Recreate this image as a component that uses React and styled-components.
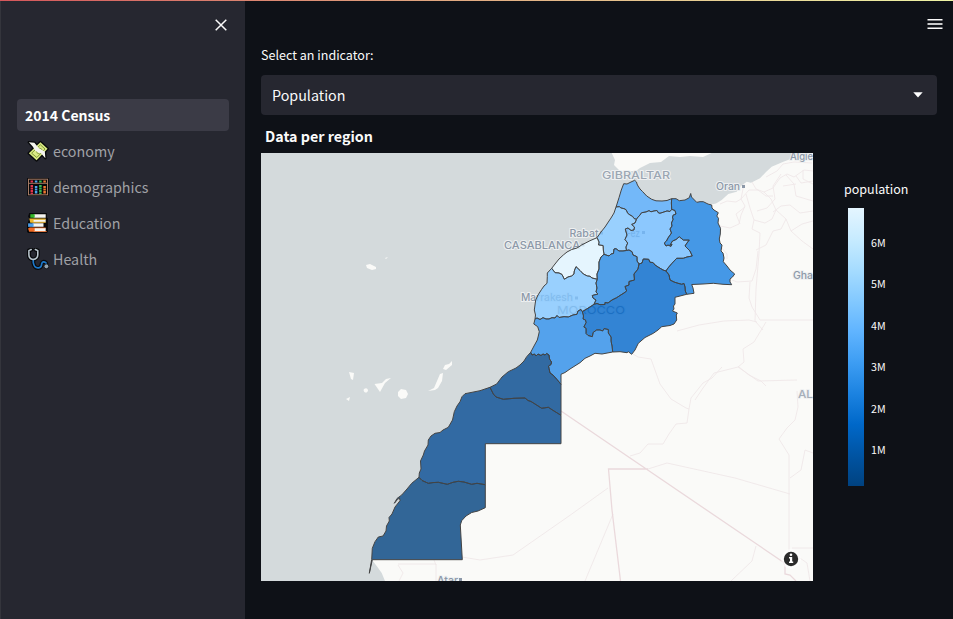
import React from 'react';
import styled, { createGlobalStyle } from 'styled-components';

const GlobalStyle = createGlobalStyle`
  *, *::before, *::after { box-sizing: border-box; }
  html, body { margin: 0; padding: 0; background: #0e1117; overflow: hidden; }
  body { font-family: "Noto Sans CJK JP", "Noto Sans", sans-serif; color: #fafafa; }
`;

const Page = styled.div`
  display: grid;
  grid-template-rows: 1px 1fr;
  width: 953px;
  height: 619px;
  background: #0e1117;
`;
const Decoration = styled.div`
  background: linear-gradient(90deg, #d5575b, #e0a57f 45%, #eff5a5);
`;
const Body = styled.div`
  display: grid;
  grid-template-columns: 245px 1fr;
`;
const Sidebar = styled.aside`
  background: #262730;
  border-left: 1px solid #34353c;
  padding: 16px 16px 0;
  display: flex;
  flex-direction: column;
`;
const CloseRow = styled.div`
  display: flex;
  justify-content: flex-end;
  height: 82px;
  svg { display: block; }
`;
const Nav = styled.nav`
  display: flex;
  flex-direction: column;
  gap: 4px;
`;
const NavItem = styled.a`
  display: flex;
  align-items: center;
  height: 32px;
  gap: 4px;
  padding-left: ${(p) => (p.$active ? 8 : 10)}px;
  border-radius: 4px;
  background: ${(p) => (p.$active ? '#3b3b46' : 'transparent')};
  color: ${(p) => (p.$active ? '#ffffff' : '#a0a1a6')};
  font-size: ${(p) => (p.$active ? 14 : 14.3)}px;
  font-weight: ${(p) => (p.$active ? 700 : 400)};
  line-height: 20px;
  svg { display: block; flex: none; }
`;
const Main = styled.main`
  display: flex;
  flex-direction: column;
  padding: 14px 16px 0;
`;
const Toolbar = styled.header`
  display: flex;
  justify-content: flex-end;
  height: 30px;
  margin-right: -7px;
  svg { display: block; }
`;
const FieldLabel = styled.label`
  height: 30px;
  font-size: 12.55px;
  line-height: 20px;
`;
const Select = styled.div`
  display: flex;
  align-items: center;
  justify-content: space-between;
  height: 40px;
  padding: 0 14px 0 11px;
  border-radius: 4px;
  background: #262730;
  font-size: 14.3px;
  line-height: 20px;
`;
const ChartTitle = styled.h2`
  margin: 0;
  height: 38px;
  padding: 11px 0 0 4px;
  font-size: 14.3px;
  font-weight: 700;
  line-height: 20px;
`;
const Chart = styled.section`
  display: grid;
  grid-template-columns: 552px 1fr;
`;
const MapSvg = styled.svg`
  display: block;
  width: 552px;
  height: 428px;
  background: #d4dadc;
`;
const Legend = styled.div`
  padding: 26px 0 0 31px;
`;
const LegendTitle = styled.div`
  height: 29px;
  font-size: 12.5px;
  line-height: 20px;
`;
const LegendBody = styled.div`
  display: flex;
  gap: 7px;
  padding-left: 4px;
`;
const ColorBar = styled.div`
  width: 16px;
  height: 278px;
  background: linear-gradient(
    to bottom,
    #e4f5ff, #c7ebff, #a6dcff, #83c9ff, #60b4ff,
    #3d9df3, #1c83e1, #0068c9, #0054a3, #004280
  );
`;
const Ticks = styled.div`
  display: flex;
  flex-direction: column;
  padding-top: 14px;
  font-size: 10.7px;
`;
const Tick = styled.span`
  height: 41.4px;
  line-height: 41.4px;
`;

/* Shared boundary lines, in map coordinates. */
const edges = {
  coastNorth: '616,207 616.7,205 619,197.7 621.3,190 623.7,183.7 627,184 631,182 634.7,180.3 636.5,182 637,184 638,186 640,189 642.7,191.7 646.7,196 651.7,199.3 656,200.8 662,201 667,200.5 670,199.3 671.7,198.7',
  northOriental: '671.7,198.7 671.4,203 671.7,209.3',
  northFez: '671.7,209.3 670,211.5 667,211 664,212 660,213.3 658.5,213 657,210.5 654,211 651,211.8 649,210.7 646,212 641.7,212.7 640,215 637.3,218 636.5,219.5',
  northRabat: '636.5,219.5 634,218.5 632.7,216.5 630,215 627.7,213.3 626,209.7 624,208.7 621,208 619.3,206.7 616,207',
  coastRabat: '616,207 614,213 611,218 608.3,222 605,227 601,232 597,237.7',
  casaRabat: '597,237.7 599,242 598.5,245 603,245.5 603.3,250 604,254.3',
  beniRabat: '604,254.3 609,256 611,254 613.5,253.5 614,249 616,248.7 619,251 623,251 626.5,250.5',
  fezRabat: '626.5,250.5 626,247 627.7,243 625,239.5 627,235 625.3,229 628,228 631,230.5 634,230 634.5,227 631.7,224.5 635,223 636.5,219.5',
  fezOriental: '671.7,209.3 675,210.5 676,214 673,215.3 672.5,218 673.3,219 671.5,223 672,226 670,229 671.5,233 668,238 666.5,241 664.3,243 666,246 668,245 671,246.3 672,244.5 670,245 672.5,241 676,239.5 679.3,236.7 683.3,240 689.3,240 687,243 685,246 688,249 690,251 692.3,256 687,257 683.3,258.3 676.7,258.3 672,263.3 668,268 666,271',
  fezDraa: '666,271 663,270 658,267 655,265 653,262.5 650,262.3 648.7,259.3 643.3,259 642,263 639,264',
  fezBeni: '639,264 637,261 637,256.7 633,255 632,251.7 629,250 626.5,250.5',
  coastOriental: '671.7,198.7 676,198.7 679.3,200.7 685,200 689.3,197.7 690.7,193.5 691.5,197 696.7,202.3 700,201.7 703.3,201.7 708,204 711.7,205 712,208 714,210 718.3,212.7 716.8,216 718.5,218.3 718,223 720.5,228.3 720.3,234 719.3,239 720,243 722,245 721,251 723,253 724,258 723.3,261.7 727,266 730,270 734.7,274 732.5,277 730,279 730,282 731.7,284.7 723,284.3 713.3,283.3 703,284 691.7,284.5 693,288 694,293.3 686.7,294.3',
  orientalDraa: '666,271 669,275 670,280 674,282 677,283 681.7,284.3 684,283.5 685,287 685.3,291 686.7,294.3',
  draaSouth: '686.7,294.3 675,297.3 675,304 673.5,306 674,309 672.5,311 677.3,313 676.3,315 676.7,320 674,324 670,325.5 661.7,326.7 658,330 653.3,333.3 645,337.5 638.3,343.3 635,350 631.7,354.3 628.3,351.7 627,352.7 620,351.7 612.7,352',
  draaSouss: '582.3,311.7 583.5,316 583,319 585.5,320 586,322.7 583.8,327 586,328.3 586,333.5 588,335.5 592.3,336.7 593.3,332.3 596.7,330 600,330 602.7,331 604,328.7 608.3,329.5 608.3,333 611,337 611,341 612,346 612.7,352',
  draaMarrakesh: '594,304.3 590,307 582.3,311.7',
  draaBeni: '639,264 638,269 634,274 634.5,280 629,281.5 629,285 625,286.5 626.7,291 624,293 620,295.5 616.7,297.7 612,300 608,303 605,302.5 605,304.5 600,304.7 597,303.5 594,304.3',
  casaBeni: '604,254.3 601,257 599,262 599,269 597,274 597.3,279.3',
  casaMarrakesh: '597.3,279.3 592,278 590,276.3 587.3,276 583.3,274 580,270.5 576,266.7 574.3,271 574,274 571.7,276 568,277 564.3,279.3 562,274.5 559,273 555,272.7 551.7,268.3',
  beniMarrakesh: '597.3,279.3 596,283 597,288 596,292 598,294 592.3,295.5 593,298 596,300 594,304.3',
  coastCasa: '551.7,268.3 555,264 559,259 563.3,255 567,252 571.7,249.5 577,248 581.7,245 590,240.7 597,237.7',
  coastMarrakesh: '551.7,268.3 547.3,273 547.3,276.7 547,283.3 544,286 541.7,289.3 538,295 535.7,300 534.3,310 535.5,315 535,319',
  marrakeshSouss: '535,319 537,318 540,319.5 543,317.7 546,319 549,319 552,317.7 555,318 557,315.5 559,317.5 564,316.7 568.3,317 573,315 577,314.3 578,311 581,309.5 582.3,311.7',
  coastSouss: '535,319 533.8,324 537.7,326.7 539.3,331.7 538.3,336 537.3,340 534,346 530.7,352.3',
  soussGuelmim: '530.7,352.3 532,355 534.5,354 536,356 538,354 541,355.5 543,354 545,355 546.7,353.5 549,355 549.5,359 551.5,362 551,364.5 548.5,366 549,368.3 550,373 553,375 557,379.5 561,384.3',
  soussSouth: '561,384.3 561,374.3 565,372.5 570,369 580,362.7 585,358.3 590,356 595,353.3 602,354 612.7,352',
  coastGuelmim: '530.7,352.3 526.7,356.7 524,361 520,365 516,368 508.3,371.7 502,377 496.7,384 490,387.3',
  guelmimLaayoune: '490,387.3 493.3,394 496,397 503.3,399.3 514,398.3 525,398 528,400.5 531,401.5 535,404 541.7,408.3 548.3,407.3 554,411 561,415.3',
  coastLaayoune: '490,387.3 480,390.7 465,393.7 462,396.7 460,401.7 457,406 454.3,411.7 452.5,420 448.3,427.3 443,430 440,432.5 435,433.3 431,436 428.3,440 428,445 424.5,451 423.3,455 420.5,461 421,469 419.3,473 419,477.3',
  laayouneDakhla: '419,477.3 422,480.5 428.3,483.3 433,482.6 438.3,482.3 447.3,484.3 453,482.3 458.3,481.3 464,482 471.7,484.3 477,483.3 485.3,484.7',
  coastDakhla: '419,477.3 411.7,483.3 407,489 401.7,495 397,498.5 394.3,503.3 397.5,499.5 399.5,498 400,500.7 395,507 392,514 389,517.5 389.3,521 386.5,526 386,531 383,536 378.3,537 375,541.7 372.3,548.3 371.7,559.5',
};

const trace = (names) =>
  `M${names
    .map((name) => {
      const reverse = name[0] === '-';
      const pts = edges[reverse ? name.slice(1) : name] || name;
      return reverse ? pts.split(' ').reverse().join(' ') : pts;
    })
    .join(' ')}Z`;

const regions = [
  { fill: '#51a7f9', path: ['coastNorth', 'northOriental', 'northFez', 'northRabat'] },
  { fill: '#81c6ff', path: ['coastRabat', 'casaRabat', 'beniRabat', 'fezRabat', 'northRabat'] },
  { fill: '#70bcff', path: ['northFez', '-fezRabat', '-fezBeni', '-fezDraa', '-fezOriental'] },
  { fill: '#1880e1', path: ['coastOriental', '-orientalDraa', '-fezOriental', '-northOriental'] },
  { fill: '#e0f4ff', path: ['coastCasa', 'casaRabat', 'casaBeni', 'casaMarrakesh'] },
  { fill: '#81c6ff', path: ['coastMarrakesh', 'marrakeshSouss', '-draaMarrakesh', '-beniMarrakesh', 'casaMarrakesh'] },
  { fill: '#2688e4', path: ['beniRabat', '-fezBeni', 'draaBeni', '-beniMarrakesh', '-casaBeni'] },
  { fill: '#0167cb', path: ['orientalDraa', 'draaSouth', '-draaSouss', '-draaMarrakesh', '-draaBeni', '-fezDraa'] },
  { fill: '#2a8ce9', path: ['coastSouss', 'soussGuelmim', 'soussSouth', '-draaSouss', '-marrakeshSouss'] },
  { fill: '#00468c', path: ['coastGuelmim', 'guelmimLaayoune', '561,384.3', '-soussGuelmim'] },
  { fill: '#00468d', path: ['coastLaayoune', 'laayouneDakhla', '485.3,443.7 561,443.7 561,415.3', '-guelmimLaayoune'] },
  { fill: '#00417e', path: ['coastDakhla', '369.3,573.3 372.3,559.7 462.3,559.7 460.3,525 461.7,520.7 466,516 471.7,512.5 478,511 485.3,507.7 485.3,484.7', '-laayouneDakhla'] },
];

const land = trace([
  '385,581 381.7,573 376.7,566 371.7,559.5', '-coastDakhla', '-coastLaayoune', '-coastGuelmim',
  '-coastSouss', '-coastMarrakesh', 'coastCasa', '-coastRabat', 'coastNorth',
  '676,198.7 679.3,200.7 685,200 689.3,197.7 690.7,193.5 691.5,197 696.7,202.3 703.3,201.7 711.7,204.5 716,203.5 721.7,200 728.3,194 736.7,191.7 741,186 746.7,181.7 751,182.7 760,178.3 766,172 771.7,166.7 783.3,161.7 796.7,156.7 806.7,154 813,152 813,581',
]);

const adminLines = [
  'M720 204l7-3 9 1 5-3 3-15M720 226l10 2 9-4 2-9 4-9-4-7 8-9 9 0 8 6 7 0M746 194l4 14 4 12-2 9 8 4-1 20-3 36-1 32 8 9',
  'M752 182l4 7 8 3 9-4 7-10 7-4 7 3 10-7 9 1M766 177l11-6 6-7 11-2 18 1M764 192l7 7 5 11 10 9 5 12 11 10 11 8',
  'M781 174l-8 12 2 13-8 9-10 3M786 175l8 9 2 12 17 5M796 176l5 7 12-2M803 170l0 9 10 5M773 212l8-6 9-1 10 8 13-2',
  'M745 207l-9 7 4 10M754 220l11 3 7-4 4-9M786 219l-5 10-8 2-7 14-10 5M791 231l11-7 11-3M783 186l13-2M720 246l7 8 0 5',
  'M732 280l5 2 15-1 4-12 2-18M750 282l-1 16 3 9 8 13 53 0M677 331l22-6 25-4 25-1 8 2M766 322l-12 20-11 7 1 13-6 5-24 6-11 15-8 12',
  'M633 354l5 3 13 2 9 25 11 15 15 9 3 1 2-11 12-15 9-5 10-11M689 409l-2 14-11 1-7 10-6 10-15 0-8 9-10 3',
  'M797 391l1 16-3 13-8 8-8 11 10 16 0 100M790 478l11-8 4-20 8 3M648 469l19-6 68 15 55 16M738 367l20 14 39-1M739 367l10 8 12 6 5 5',
  'M608 488l-39 28-56 39-33 5-18-3M613 514l-28 67M756 546l-4 15-21 20M792 548l21 0M797 556l10 7 3 18M398 564l38 0 0 17M398 565l5 8-4 8M434 560l2 5',
];

const Label = ({ x, y, width, size = 10, weight = 500, fill = '#8c98a8', children }) => (
  <text
    x={x} y={y} textLength={width} lengthAdjust="spacingAndGlyphs" fontSize={size}
    fontFamily="Inter, sans-serif" fontWeight={weight} fill={fill}
    stroke="#eef0f1" strokeWidth="2" strokeLinejoin="round" paintOrder="stroke"
  >
    {children}
  </text>
);

const PopulationMap = () => (
  <MapSvg viewBox="261 153 552 428">
    <path d={land} fill="#fafaf8" />
    <path fill="#fafaf8" d="M611.7 153L615 160 614 165 619 170 623 173 627 171 636 171 640 168 650 163 661 162 669 156 680 157 690 156 703 157 711.7 153Z" />
    <path
      fill="#fafaf8"
      d="M366 265l4-1 6 3 0 2-4 1-5-2zM349 372l5 1-1 7-2-1zM364 389a2.2 2.2 0 1 0 4 1q-1-3-4-1zM346 399l4-2-1 4zM374.5 384l7.5-1 4-4 5-1-6 5-5 9zM398 392l3-3 5 1 2 4-2 4-5 1-3-3zM440 374l3-1-1 8-4 7-3 2-7 1 6-3zM443 369l2-4 4-1 3-3 0 4-6 5zM385 258l3-1-2 2z"
    />
    <g fill="none" stroke="#efe8e9" strokeWidth="0.9" strokeLinejoin="round">
      {adminLines.map((d) => <path key={d} d={d} />)}
    </g>
    <path d="M561 411L783 562 785 566 785 574 790 575 796 581M648 469L608.5 469 612 510 620.5 581" fill="none" stroke="#ead9dc" strokeWidth="1.3" />
    <Label x={602} y={178.5} width={68} size={10.5} fill="#9ba6b3">GIBRALTAR</Label>
    <Label x={716} y={190} width={24}>Oran</Label>
    <Label x={790} y={160} width={23}>Algie</Label>
    <Label x={793} y={278.5} width={20}>Gha</Label>
    <Label x={798} y={397.5} width={15} size={11} fill="#a5aeb9">AL</Label>
    <Label x={569.5} y={237} width={29}>Rabat</Label>
    <Label x={504} y={248.5} width={76}>CASABLANCA</Label>
    <Label x={521} y={301} width={52}>Marrakesh</Label>
    <Label x={626} y={236.5} width={14}>Fez</Label>
    <Label x={557} y={314} width={68} size={11} weight={400} fill="#8793a1">MOROCCO</Label>
    <Label x={437} y={583.5} width={21}>Atar</Label>
    <g fill="#8c98a8">
      <rect x="742" y="185" width="3" height="3" />
      <rect x="575" y="296.5" width="3" height="3" />
      <rect x="642" y="231" width="3" height="3" />
      <rect x="600" y="231.5" width="3" height="3" />
      <rect x="581.5" y="243.5" width="3" height="3" />
      <rect x="459" y="578" width="3" height="3" />
    </g>
    <g stroke="#444" strokeWidth="1" strokeLinejoin="round">
      {regions.map((r) => (
        <path key={r.path[0]} d={trace(r.path)} fill={r.fill} fillOpacity="0.8" />
      ))}
    </g>
    <circle cx="791" cy="559" r="10" fill="#ffffff" opacity="0.6" />
    <circle cx="791" cy="559" r="7.2" fill="#2b2b2b" />
    <path d="M789.5 557h2.7v4.5h1v1.5h-4.2v-1.5h1v-3h-1v-1.5z" fill="#fff" />
    <circle cx="791" cy="554.8" r="1.3" fill="#fff" />
  </MapSvg>
);

const MoneyIcon = () => (
  <svg width="22" height="22" viewBox="0.8 1 20 20">
    <g stroke="#08090b" strokeWidth="2.4" strokeLinejoin="round">
      <path d="M2.5 13L13 3l6.5 6-10 10.5z" fill="#d9ea83" />
      <path d="M2.5 3l5 .5 4.500 5.500 5 2.500 .5 6-4-4.500-5-2-2.500-4z" fill="#f4f4ee" />
    </g>
    <path d="M2.500 13L13 3l6.500 6-10 10.500z" fill="#d9ea83" />
    <path d="M5 13L13 5.400l4.200 3.800-7.500 7.700z" fill="none" stroke="#819638" strokeWidth=".9" />
    <circle cx="12" cy="11" r="2.600" fill="#eef6bd" stroke="#819638" strokeWidth=".8" />
    <path d="M2.500 3l5 .5 4.500 5.500 5 2.500 .5 6-4-4.500-5-2-2.500-4z" fill="#f4f4ee" />
  </svg>
);
const AbacusIcon = () => (
  <svg width="22" height="22" viewBox="0 0 22 22">
    <rect x=".2" y="2" width="21.6" height="18" fill="#08090b" />
    <rect x="1.5" y="3.2" width="19" height="15.6" fill="none" stroke="#a57b65" strokeWidth="1" />
    <path d="M2 7.3h18" stroke="#a57b65" />
    <g fill="none" strokeWidth="2.5" strokeDasharray="2 .5">
      <path d="M4.8 4.5v2M4.8 9v9" stroke="#e1344b" />
      <path d="M9.1 4.5v2M9.1 10v8" stroke="#4ea3ed" />
      <path d="M13.4 4.5v2M13.4 9v9" stroke="#35ba55" />
      <path d="M17.6 4.5v2M17.6 10v8" stroke="#f07830" />
    </g>
  </svg>
);
const BooksIcon = () => (
  <svg width="22" height="22" viewBox="1 1 20 20">
    <path d="M3 2h16v4l1 1v12l-1 1H2l-1-1v-6l1-3 1-3-1-2z" fill="#08090b" />
    <path d="M7 3h11v3.200H7zM6 7.600h12v2.800H6zM6 11.300h10v3.200H6zM7 15.600h11v3.400H7z" fill="#f5f4f0" />
    <path d="M4 3h4v3.200H4z" fill="#35b829" />
    <path d="M3 7h15v1.100H7v1.800h11v.8H4z" fill="#efb92b" />
    <path d="M2 11.300h5v3.200H2z" fill="#4b9ee9" />
    <path d="M2 16q1-1 2-1h14v.8H8v2.500h11v.7H3z" fill="#f16a22" />
  </svg>
);
const StethoscopeIcon = () => (
  <svg width="22" height="22" viewBox="1 0.500 21 21">
    <g fill="none" strokeLinecap="round" strokeLinejoin="round">
      <path d="M5 2L2.800 3v4q0 4 4 4.500 4.500-.5 4.500-4.500V3L9 2M7 11.500v3q1 5.500 5 5 3-.5 3-4 1-3 4-1l1 3" stroke="#08090b" strokeWidth="3.800" />
      <path d="M7 11.500v3q1 5.500 5 5 3-.5 3-4 1-3 4-1l1 3" stroke="#1c78c9" strokeWidth="1.600" />
      <path d="M5 2L2.800 3v4q0 4 4 4.500 4.500-.5 4.500-4.500V3L9 2" stroke="#b9c5cd" strokeWidth="1.500" />
    </g>
    <circle cx="19.500" cy="18" r="2.300" fill="#92a2ae" stroke="#08090b" strokeWidth=".7" />
  </svg>
);

const pages = [
  { label: 'economy', Icon: MoneyIcon },
  { label: 'demographics', Icon: AbacusIcon },
  { label: 'Education', Icon: BooksIcon },
  { label: 'Health', Icon: StethoscopeIcon },
];

export default function App() {
  return (
    <>
      <GlobalStyle />
      <Page>
        <Decoration />
        <Body>
          <Sidebar>
            <CloseRow>
              <svg width="16" height="16" viewBox="0 0 16 16">
                <path d="M2.700 2.700l10.600 10.600M13.300 2.700L2.700 13.300" stroke="#fafafa" strokeWidth="1.500" />
              </svg>
            </CloseRow>
            <Nav>
              <NavItem $active><span>2014 Census</span></NavItem>
              {pages.map(({ label, Icon }) => (
                <NavItem key={label}><Icon /><span>{label}</span></NavItem>
              ))}
            </Nav>
          </Sidebar>
          <Main>
            <Toolbar>
              <svg width="18" height="18" viewBox="0 0 18 18">
                <path d="M1.500 4.800h15M1.500 13.200h15" stroke="#fafafa" strokeWidth="1.600" />
                <path d="M1.500 9h15" stroke="#c9cacb" strokeWidth="2" />
              </svg>
            </Toolbar>
            <FieldLabel>Select an indicator:</FieldLabel>
            <Select>
              Population
              <svg width="10" height="6" viewBox="0 0 10 6"><path d="M.3.3h9.400L5 5.500z" fill="#fff" /></svg>
            </Select>
            <ChartTitle>Data per region</ChartTitle>
            <Chart>
              <PopulationMap />
              <Legend>
                <LegendTitle>population</LegendTitle>
                <LegendBody>
                  <ColorBar />
                  <Ticks>
                    {['6M', '5M', '4M', '3M', '2M', '1M'].map((t) => <Tick key={t}>{t}</Tick>)}
                  </Ticks>
                </LegendBody>
              </Legend>
            </Chart>
          </Main>
        </Body>
      </Page>
    </>
  );
}
